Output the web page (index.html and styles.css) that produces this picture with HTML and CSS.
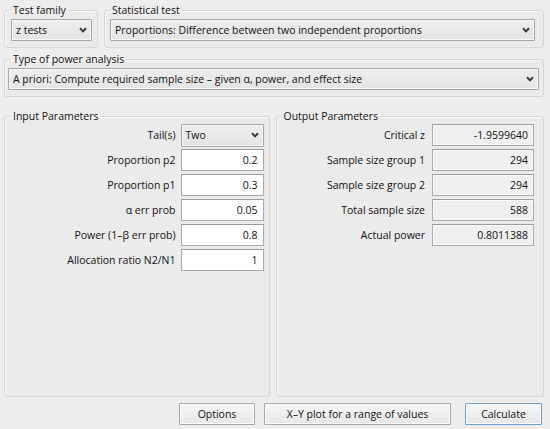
FILE: index.html
```html
<!DOCTYPE html>
<html>
<head>
<meta charset="utf-8">
<link rel="stylesheet" href="styles.css">
</head>
<body>
<div class="window">
  <div class="top-row">
    <fieldset class="group family">
      <legend>Test family</legend>
      <div class="select"><span>z tests</span><svg class="chev" width="8" height="6" viewBox="0 0 8 6"><polyline points="1,1.2 4,4.4 7,1.2" /></svg></div>
    </fieldset>
    <fieldset class="group stat">
      <legend>Statistical test</legend>
      <div class="select"><span>Proportions: Difference between two independent proportions</span><svg class="chev" width="8" height="6" viewBox="0 0 8 6"><polyline points="1,1.2 4,4.4 7,1.2" /></svg></div>
    </fieldset>
  </div>
  <fieldset class="group type">
    <legend>Type of power analysis</legend>
    <div class="select"><span>A priori: Compute required sample size – given α, power, and effect size</span><svg class="chev" width="8" height="6" viewBox="0 0 8 6"><polyline points="1,1.2 4,4.4 7,1.2" /></svg></div>
  </fieldset>
  <div class="params">
    <fieldset class="group input-group">
      <legend>Input Parameters</legend>
      <div class="grid in-grid">
        <label>Tail(s)</label>
        <div class="select small"><span>Two</span><svg class="chev" width="8" height="6" viewBox="0 0 8 6"><polyline points="1,1.2 4,4.4 7,1.2" /></svg></div>
        <label>Proportion p2</label>
        <div class="field">0.2</div>
        <label>Proportion p1</label>
        <div class="field">0.3</div>
        <label>α err prob</label>
        <div class="field">0.05</div>
        <label>Power (1–β err prob)</label>
        <div class="field">0.8</div>
        <label>Allocation ratio N2/N1</label>
        <div class="field">1</div>
      </div>
    </fieldset>
    <fieldset class="group output-group">
      <legend>Output Parameters</legend>
      <div class="grid out-grid">
        <label>Critical z</label>
        <div class="field out">-1.9599640</div>
        <label>Sample size group 1</label>
        <div class="field out">294</div>
        <label>Sample size group 2</label>
        <div class="field out">294</div>
        <label>Total sample size</label>
        <div class="field out">588</div>
        <label>Actual power</label>
        <div class="field out">0.8011388</div>
      </div>
    </fieldset>
  </div>
  <div class="buttons">
    <button class="btn options">Options</button>
    <button class="btn xy">X–Y plot for a range of values</button>
    <button class="btn calc">Calculate</button>
  </div>
</div>
</body>
</html>
```

FILE: styles.css
```css
* { box-sizing: border-box; }
html, body {
  margin: 0;
  padding: 0;
  background: #ededed;
}
body {
  font-family: "Open Sans", "DejaVu Sans", sans-serif;
  font-size: 10.5px;
  font-weight: 500;
  color: #111111;
}
.window {
  width: 550px;
  height: 429px;
  padding: 3px 6px 4px 4px;
  display: flex;
  flex-direction: column;
  background: #ededed;
}
.group {
  margin: 0;
  border: 1px solid #d6d6d6;
  border-radius: 3px;
  background: #ebebeb;
  box-shadow: inset 1px 1px 0 #f7f7f7;
  min-width: 0;
}
.group legend {
  padding: 0 2px;
  line-height: 14px;
  height: 14px;
  color: #111111;
}
.top-row {
  display: flex;
  gap: 6px;
  height: 45px;
}
.family {
  width: 94px;
  flex: none;
  padding: 2px 5px 6px 6px;
}
.stat {
  flex: 1;
  padding: 2px 8px 6px 5px;
}
.type {
  margin-top: 4px;
  height: 45px;
  padding: 2px 4px 6px 3px;
}
.type legend { margin-left: 3px; }
.select {
  height: 22px;
  display: flex;
  align-items: center;
  justify-content: space-between;
  padding: 0 4px 0 4px;
  background: linear-gradient(#ededed, #e4e4e4);
  border: 1px solid #a6a6a6;
  box-shadow: inset 0 0 0 1px #f8f8f8;
  border-radius: 1px;
  white-space: nowrap;
  overflow: hidden;
}
.chev {
  flex: none;
}
.chev polyline {
  fill: none;
  stroke: #3a3a3a;
  stroke-width: 2;
}
.params {
  margin-top: 12px;
  flex: 1;
  display: flex;
  gap: 6px;
  min-height: 0;
}
.input-group {
  flex: 1;
  padding: 1px 5px 6px 6px;
}
.output-group {
  flex: 1;
  padding: 1px 9px 6px 5px;
}
.grid {
  display: grid;
  row-gap: 3px;
  grid-auto-rows: 22px;
  align-items: center;
}
.in-grid {
  grid-template-columns: 1fr 83px;
  column-gap: 5px;
}
.out-grid {
  grid-template-columns: 1fr 102px;
  column-gap: 7px;
}
.grid label {
  text-align: right;
  white-space: nowrap;
}
.select.small {
  height: 23px;
}
.field {
  height: 22px;
  line-height: 20px;
  background: #ffffff;
  border: 1px solid #a9a9a9;
  border-top-color: #9c9c9c;
  text-align: right;
  padding-right: 5px;
}
.field.out {
  background: #efefef;
  box-shadow: inset 0 0 0 1px #fafafa;
}
.buttons {
  margin-top: 6px;
  display: flex;
  justify-content: flex-end;
  height: 22px;
  padding-right: 2px;
}
.btn {
  font-family: inherit;
  font-size: 10.5px;
  font-weight: 500;
  color: #111111;
  height: 22px;
  padding: 0;
  border: 1px solid #a8a8a8;
  border-radius: 1px;
  background: linear-gradient(#f7f7f7, #e6e6e6);
  box-shadow: inset 0 0 0 1px #fbfbfb;
}
.options { width: 76px; }
.xy { width: 187px; margin-left: 9px; }
.calc {
  width: 77px;
  margin-left: 14px;
  border-color: #6d9fd0;
}
```
